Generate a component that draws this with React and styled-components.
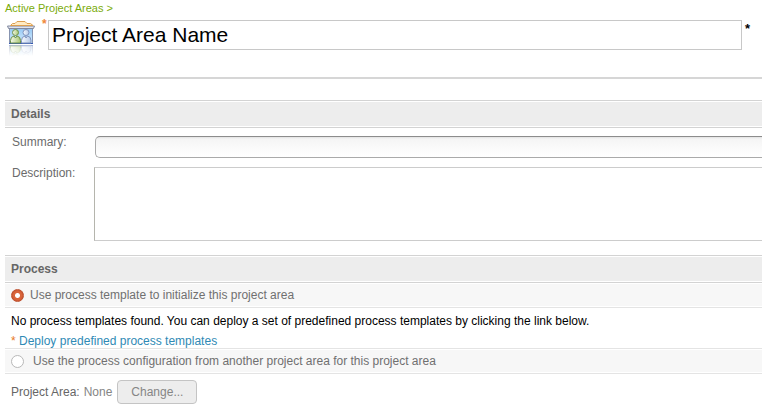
import React from "react";
import styled, { createGlobalStyle } from "styled-components";

const GlobalStyle = createGlobalStyle`
  * { box-sizing: border-box; }
  body {
    margin: 0;
    background: #fff;
    color: #6b6b6b;
    font: 12px/16px "Liberation Sans", Arial, sans-serif;
    overflow-x: hidden;
  }
  input, textarea, button { font-family: inherit; margin: 0; }
`;

const Page = styled.main`
  padding-left: 5px;
`;

const Breadcrumb = styled.nav`
  font-size: 11px;
  line-height: 16px;
  height: 20px;
  color: #7aab0a;
  a { color: inherit; text-decoration: none; }
`;

const TitleBar = styled.header`
  display: flex;
  align-items: flex-start;
  padding-right: 11px;
  height: 59px;
  border-bottom: 2px solid #d6d6d6;
  margin-bottom: 21px;
`;

const Required = styled.span`
  width: 6px;
  margin: ${(p) => (p.$bold ? "2px 0 0 3px" : "0 0 0 7px")};
  font-size: ${(p) => (p.$bold ? "13px" : "12px")};
  font-weight: bold;
  line-height: ${(p) => (p.$bold ? "14px" : "8px")};
  color: ${(p) => (p.$bold ? "#000" : "#f0883a")};
`;

const TitleInput = styled.input`
  flex: 1;
  min-width: 0;
  height: 30px;
  padding: 0 3px;
  border: 1px solid #c8c8c8;
  background: #fff;
  color: #000;
  font-size: 21px;
`;

const SectionHeading = styled.h2`
  margin: 0;
  height: 28px;
  padding: 0 6px;
  border: solid #d3d3d3;
  border-width: 1px 0;
  background: #ededed;
  box-shadow: inset 0 1px #fff, inset 0 -1px #fff;
  font-size: 12px;
  line-height: 26px;
  color: #666;
`;

const Fields = styled.div`
  display: grid;
  grid-template-columns: 82px 1fr;
  row-gap: 9px;
  padding: 8px 0 14px 7px;
  label { line-height: 13px; }
`;

const SummaryInput = styled.input`
  height: 22px;
  margin-left: 1px;
  padding: 0 6px;
  border: 1px solid #aaa;
  border-top-color: #8c8c8c;
  border-right: 0;
  border-radius: 5px 0 0 5px;
  background: linear-gradient(#e2e2e2, #f5f5f5 2px, #fff);
  font-size: 12px;
`;

const DescriptionInput = styled.textarea`
  display: block;
  height: 74px;
  padding: 4px;
  border: 1px solid #ccc;
  border-left-color: #b5b5ad;
  border-right: 0;
  resize: none;
  font-size: 12px;
`;

const OptionRow = styled.label`
  display: flex;
  align-items: center;
  gap: ${(p) => p.$gap};
  height: ${(p) => (p.$ruled ? "26px" : "25px")};
  padding-left: 6px;
  border-bottom: 1px solid #e4e4e4;
  border-top: ${(p) => (p.$ruled ? "1px solid #e4e4e4" : "0")};
  background: #f7f7f7;
  box-shadow: inset 0 1px #fff, inset 0 -1px #fff;
  color: #707070;
`;

const Radio = styled.input`
  appearance: none;
  width: 13px;
  height: 13px;
  border: 1px solid #b8b8b8;
  border-radius: 50%;
  background: #fff;
  &:checked {
    border-color: #bd5130;
    background: radial-gradient(circle, #fff 0 2px, #d9643a 3px, #d9653c 4px, #c9532c 6px);
  }
`;

const TemplateNotice = styled.div`
  padding: 3px 6px 0;
  height: 40px;
  color: #000;
  line-height: 20px;
  p { margin: 0; }
`;

const DeployLine = styled.p`
  color: #e87722;
  a { color: #2f8ab5; text-decoration: none; }
`;

const AreaPicker = styled.div`
  display: flex;
  align-items: center;
  padding: 6px;
  color: #666;
`;

const AreaValue = styled.span`
  margin: 0 5px 0 4px;
  color: #858585;
`;

const ChangeButton = styled.button`
  width: 80px;
  height: 24px;
  padding: 0;
  border: 1px solid #c4c4c4;
  border-radius: 4px;
  background: #ededed;
  color: #858585;
  font-size: 12px;
`;

function ProjectAreaIcon() {
  return (
    <svg width="30" height="36" viewBox="0 0 30 36" aria-hidden="true">
      <defs>
        <linearGradient id="wall" x2="0" y2="1">
          <stop stopColor="#8fc4f3" />
          <stop offset="1" stopColor="#d8efff" />
        </linearGradient>
        <linearGradient id="fade" x2="0" y2="1">
          <stop stopColor="#fff" stopOpacity=".1" />
          <stop offset="1" stopColor="#fff" />
        </linearGradient>
        <linearGradient id="green" x2="1">
          <stop stopColor="#f4f8e8" />
          <stop offset="1" stopColor="#a9c875" />
        </linearGradient>
        <linearGradient id="blue" x2="1">
          <stop stopColor="#f8fbff" />
          <stop offset="1" stopColor="#b5c9e8" />
        </linearGradient>
        <g id="building">
          <path d="M4.500 7h23v16.500h-23z" fill="url(#wall)" stroke="#8794b0" />
          <path d="M4 23.500h24" stroke="#3559b0" />
          <g fill="url(#green)" stroke="#6c9148">
            <path d="M5.500 23v-2.500q0-4 3.500-4.500l1.500 2 1.500-2q3.500.5 3.500 4.500V23z" />
            <circle cx="10.500" cy="12.500" r="3" />
          </g>
          <g fill="url(#blue)" stroke="#7f93bd">
            <path d="M16.500 23v-2.500q0-4 3.500-4.500l1 2 1.500-2q3.500.5 3.500 4.500V23z" />
            <circle cx="21" cy="12.500" r="3" />
          </g>
          <path d="M2.500 6h27l-1 2.500h-25z" fill="#e1e3eb" stroke="#81899f" />
          <path d="M5.500 5.500 7.500 3.500H10l2-2h8l2 2h3.500l2.500 2z" fill="#ffebc4" stroke="#dc9f51" />
        </g>
      </defs>
      <use href="#building" />
      <use href="#building" transform="translate(0 49) scale(1 -1)" opacity=".5" />
      <rect y="25" width="30" height="11" fill="url(#fade)" />
    </svg>
  );
}

export default function App() {
  return (
    <Page>
      <GlobalStyle />
      <Breadcrumb aria-label="Breadcrumb">
        <a href="#areas">Active Project Areas &gt;</a>
      </Breadcrumb>
      <TitleBar>
        <ProjectAreaIcon />
        <Required>*</Required>
        <TitleInput aria-label="Project area name" defaultValue="Project Area Name" />
        <Required $bold>*</Required>
      </TitleBar>

      <section>
        <SectionHeading>Details</SectionHeading>
        <Fields>
          <label htmlFor="summary">Summary:</label>
          <SummaryInput id="summary" type="text" />
          <label htmlFor="description">Description:</label>
          <DescriptionInput id="description" />
        </Fields>
      </section>

      <section>
        <SectionHeading>Process</SectionHeading>
        <OptionRow $gap="6px">
          <Radio type="radio" name="process" defaultChecked />
          Use process template to initialize this project area
        </OptionRow>
        <TemplateNotice>
          <p>No process templates found. You can deploy a set of predefined process templates by clicking the link below.</p>
          <DeployLine>
            * <a href="#deploy">Deploy predefined process templates</a>
          </DeployLine>
        </TemplateNotice>
        <OptionRow $gap="9px" $ruled>
          <Radio type="radio" name="process" />
          Use the process configuration from another project area for this project area
        </OptionRow>
        <AreaPicker>
          Project Area: <AreaValue>None</AreaValue>
          <ChangeButton type="button" disabled>Change...</ChangeButton>
        </AreaPicker>
      </section>
    </Page>
  );
}
